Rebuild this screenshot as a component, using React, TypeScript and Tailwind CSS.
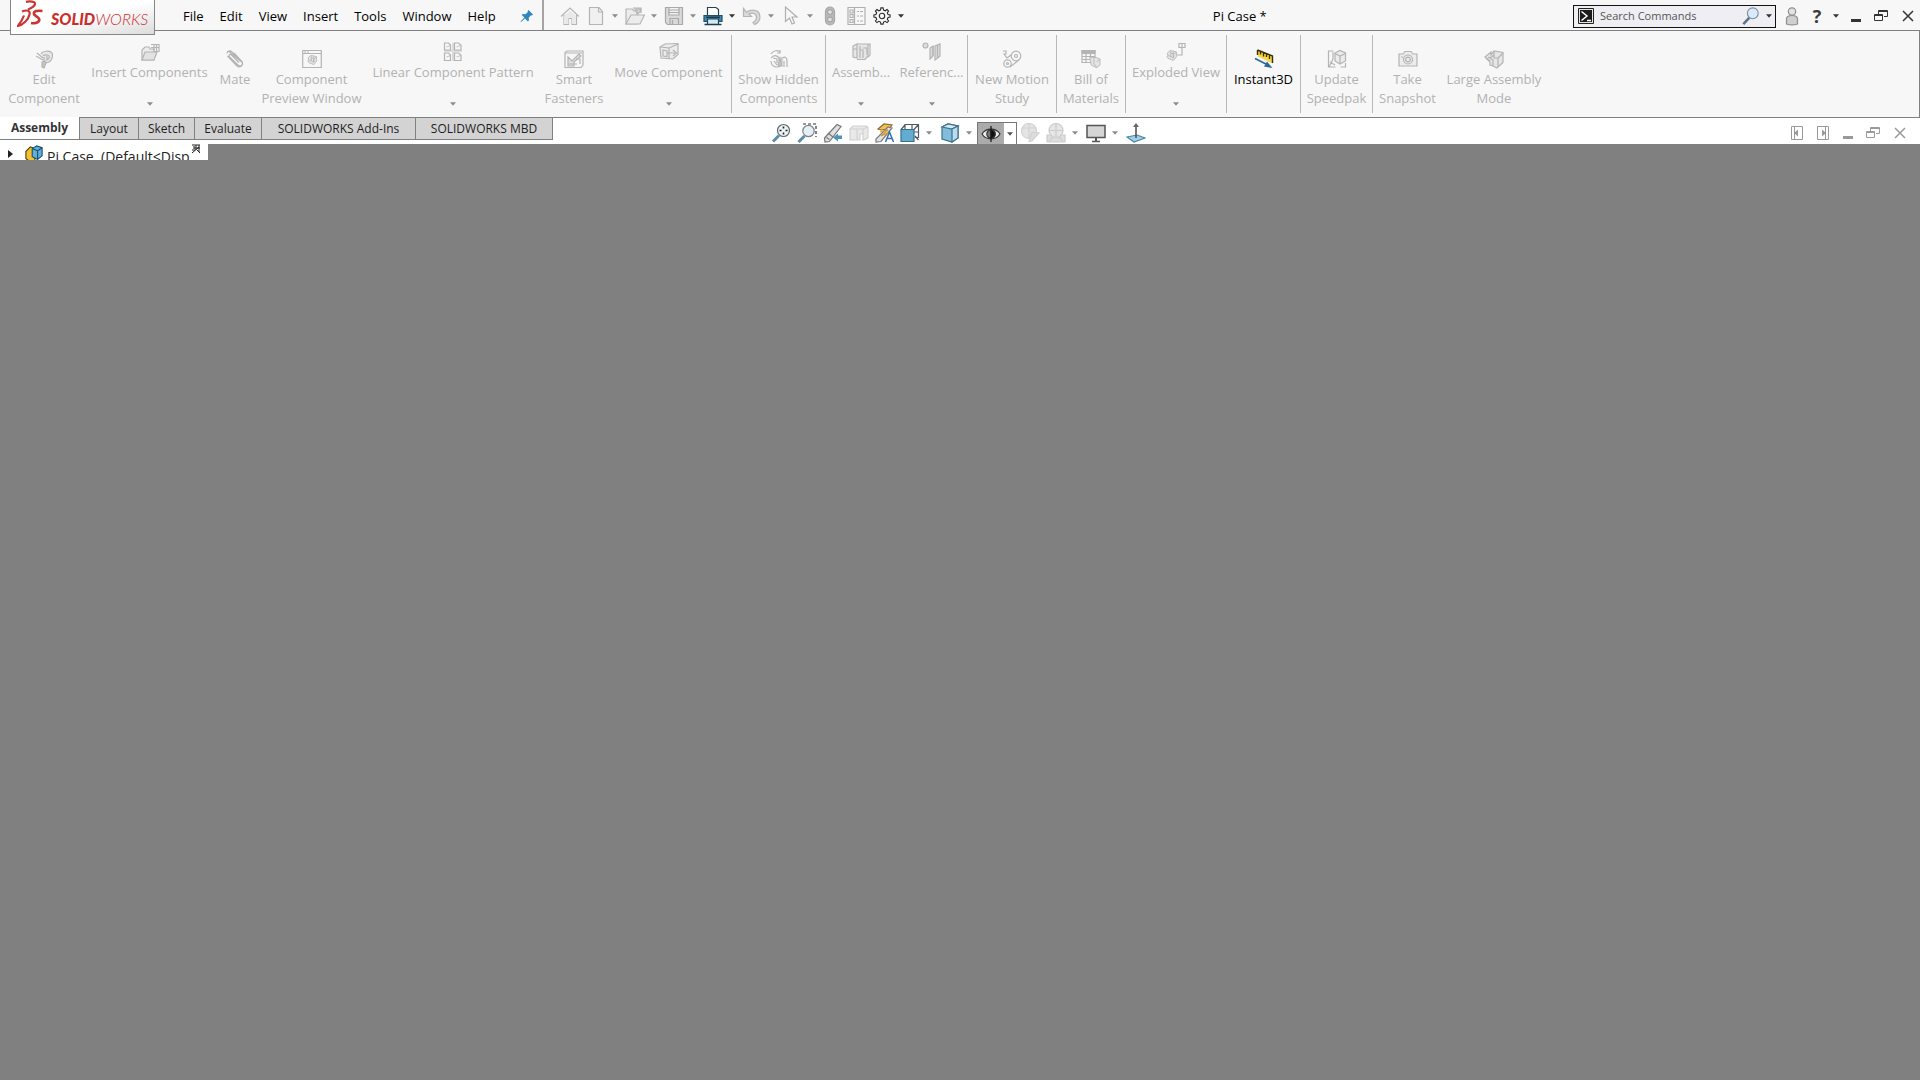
import React from "react";

type P = { children: React.ReactNode; className?: string; color?: string };

function Ico({ children, className = "size-5", color = "#b4b4b4" }: P) {
  return (
    <svg viewBox="0 0 20 20" className={`${className} shrink-0`} fill="none" stroke={color} strokeWidth="1.2" aria-hidden="true">
      {children}
    </svg>
  );
}

function Arrow({ className = "text-[#8c8c8c]" }: { className?: string }) {
  return (
    <svg viewBox="0 0 6 4" className={`h-1 w-1.5 shrink-0 ${className}`} aria-hidden="true">
      <path d="M0 0.3h6L3 3.7z" fill="currentColor" />
    </svg>
  );
}

/* ---------- shared component glyph ---------- */
const Part = ({ t = "" }: { t?: string }) => (
  <g transform={t}>
    <path d="M4 6.5 8 3l4 .5 5 1.5v7l-4 5-3-1-5-2-1.500-3 1.500-1z" fill="#e4e4e4" />
    <path d="M9 4v7.500M9 7h3.500v6M9 11.500l4 2V8.500L17 5M5 10l4 1.500M12.500 4.500v2.500" />
  </g>
);

const icons = {
  edit: (
    <>
      <path d="M7 5c1-3 9-4 11-1 1.500 3 0 7-3 9l-4 1" fill="#e8e8e8" />
      <path d="M9 6.500c2-1 5-1 6 .5s-1 4-3 4M10 8v5M13 7v3M3 4l6 5M2 7l7 4" />
      <path d="M8 13l3-1 1 2-2 5-2-1z" fill="#c4c4c4" />
    </>
  ),
  insert: (
    <>
      <path d="M2 18V8l3-3h4l1 2h4v11z" fill="#ececec" />
      <path d="M2 18 5 10h12l-3 8z" fill="#e2e2e2" />
      <path d="M11 2.500h8v7h-5M14 2.500v6M11 5.500h8M16.500 3v6" />
    </>
  ),
  mate: (
    <path d="M2 4.500c0-2.500 3-3.500 5-1.500l9.500 9.500c2.500 2.500-.5 6-3.500 3.500L4.500 8C3 6 5 4.500 6.500 6l7.500 7.500M4 2.500l12 10M2.500 7l9.500 10c3 2.500 7-1 5-4.500L9 4" />
  ),
  preview: (
    <>
      <path d="M.7 1.500h18.600v17H.7zM.7 4.500h18.600" />
      <path d="M2 3h2M5 3h2" />
      <Part t="translate(3.500 4.500) scale(.65)" />
    </>
  ),
  linear: (
    <>
      <path d="M1.500 1h4l2 2v5h-6zM11.500 1h4l2.500 2v5h-6.500zM1.500 11h4l2 2v5.500h-6zM11.500 11h4l2.500 2v5.500h-6.500z" />
      <path d="M3.500 5l4-1.500M13.500 5l4-1.500M3.500 15l4-1.500M13.500 15l4-1.500M1 9h8M11 9h8M10 1v18" strokeWidth=".8" />
    </>
  ),
  smart: (
    <>
      <path d="M1 3.500 3 2h16v14l-2 2.500H1z" />
      <path d="M1 4h17M4 8l4 4 7-7 2 2-7 6v4H4z" fill="#dedede" />
      <path d="M5 15h8M12 10h4v5" />
    </>
  ),
  move: (
    <>
      <path d="M1 5 6 2l13-.5v11L14 17l-12-1z" fill="#ececec" />
      <path d="M1 5l9 1v11M10 6l9-4M4 8v6l4 .5V9zM8 11h8M14 8l3.500 3-3.500 3" />
    </>
  ),
  hidden: (
    <>
      <path d="M2 5c2-4 7-4 9-2M11 1v3H8M2 9c4-5 9-1 8 3M4 9l4 1v4M2 12c0 4 3 6 6 6s5-2 5-6V8" />
      <path d="M5 12l3 4M14 9c2-2 4 0 4 3M15 12v6M18 12v6" />
      <path d="M11 9l-2 7 4 1z" fill="#c8c8c8" />
    </>
  ),
  assembly: (
    <>
      <path d="M2 4 6 2v14l-4-1zM6 2h11v12l-3 3.500H6" fill="#e6e6e6" />
      <path d="M9 4v12M12 6h4v7M2 7h4M9 8h3v8M17 3l2-1v11l-2 2" />
    </>
  ),
  reference: (
    <>
      <circle cx="3.500" cy="3.500" r="2.500" fill="#dcdcdc" />
      <path d="M8 6v11l3-3V4zM13 4v14l5-4V2z" fill="#dcdcdc" />
      <path d="M11 4v10M15.500 3v13" />
    </>
  ),
  motion: (
    <>
      <circle cx="14" cy="7" r="4.800" />
      <circle cx="14" cy="7" r="1.500" />
      <circle cx="5.500" cy="14.500" r="3.700" />
      <circle cx="5.500" cy="14.500" r="1" />
      <path d="M1 2h3v3H2l3 4 4-3M8 18l9-7" />
    </>
  ),
  bill: (
    <>
      <path d="M1 1.500h13v12H1zM1 4.500h13M1 7.500h13M1 10.500h8M5 1.500v12M9.500 4v8" />
      <path d="M1 1.500h13v2H1z" fill="#b4b4b4" />
      <g transform="translate(7.500 6.500) scale(.68)"><path d="M2 3h9l6 2v9l-5 4-8-4z" fill="#e4e4e4" /><path d="M8 4v8l4 5M12 9l5-3" /></g>
    </>
  ),
  exploded: (
    <>
      <Part t="translate(-1.500 6.500) scale(.7)" />
      <path d="M13 1.500h6v4h-6zM16 1.500V13h-5" />
    </>
  ),
  update: (
    <>
      <path d="M1.500 6V2h5M18.500 14v4h-5M1.500 3v15h7M6 3v7l-4 8M3 13l5 3" />
      <path d="M8 4l5-2.500 5.500 2.500v8L13 15l-5-3z" fill="#ebebeb" />
      <path d="M13 7v8M8 4.500l5 2.500 5.500-2.500" />
    </>
  ),
  snapshot: (
    <>
      <path d="M1 5h4l2-2.500h6L15 5h4v12H1z" fill="#ececec" />
      <circle cx="10" cy="10.500" r="4.500" />
      <circle cx="10" cy="10.500" r="2.300" />
      <path d="M3 8h2" />
    </>
  ),
  large: (
    <>
      <path d="M1 8l6-5v3l3-4 9 1.500v10L13 19l-4-2-3-1v-3z" fill="#e6e6e6" />
      <path d="M10 2v7h4v9M14 9l5-5M4 8l5 3v6M6 12l-4-3M10 6l-4 3" />
    </>
  ),
};

type Item = { icon: keyof typeof icons | "instant"; lines: string[]; w: string; drop?: boolean; sep?: boolean };

const ribbon: Item[] = [
  { icon: "edit", lines: ["Edit", "Component"], w: "w-[88px]" },
  { icon: "insert", lines: ["Insert Components"], w: "w-[123px]", drop: true },
  { icon: "mate", lines: ["Mate"], w: "w-12" },
  { icon: "preview", lines: ["Component", "Preview Window"], w: "w-[105px]" },
  { icon: "linear", lines: ["Linear Component Pattern"], w: "w-[178px]", drop: true },
  { icon: "smart", lines: ["Smart", "Fasteners"], w: "w-16" },
  { icon: "move", lines: ["Move Component"], w: "w-[126px]", drop: true, sep: true },
  { icon: "hidden", lines: ["Show Hidden", "Components"], w: "w-[94px]", sep: true },
  { icon: "assembly", lines: ["Assemb..."], w: "w-[70px]", drop: true },
  { icon: "reference", lines: ["Referenc..."], w: "w-[72px]", drop: true, sep: true },
  { icon: "motion", lines: ["New Motion", "Study"], w: "w-[89px]", sep: true },
  { icon: "bill", lines: ["Bill of", "Materials"], w: "w-[69px]", sep: true },
  { icon: "exploded", lines: ["Exploded View"], w: "w-[101px]", drop: true, sep: true },
  { icon: "instant", lines: ["Instant3D"], w: "w-[74px]", sep: true },
  { icon: "update", lines: ["Update", "Speedpak"], w: "w-[72px]", sep: true },
  { icon: "snapshot", lines: ["Take", "Snapshot"], w: "w-[69px]" },
  { icon: "large", lines: ["Large Assembly", "Mode"], w: "w-[104px]" },
];

function RibbonButton({ item }: { item: Item }) {
  const live = item.icon === "instant";
  return (
    <div className={`flex shrink-0 items-center ${item.w}`}>
      <button
        className={`flex h-full min-w-0 flex-1 flex-col items-center whitespace-nowrap text-[13px] leading-[19px] ${live ? "text-black" : "text-[#b2b2b2]"} ${item.drop ? "pt-[11px]" : "pt-[18px]"}`}
      >
        {item.icon === "instant" ? (
          <Ico color="#3a3000">
            <path d="M4 1.500 18.500 7v7.500L4 7.500z" fill="#f7d64a" stroke="none" />
            <path d="M3.500 1 18.500 7v7M3.500 1v5M6.500 2.500v3M9.500 3.500v4M12.500 5v3M15.500 6v4" strokeWidth="1.400" />
            <path d="M1 9.500 12 15" stroke="#2a6b95" strokeWidth="1.800" />
            <path d="M13 12.500 18.500 19 10 17.500z" fill="#2a6b95" stroke="none" />
          </Ico>
        ) : (
          <Ico>{icons[item.icon]}</Ico>
        )}
        <span className="mt-px">
          {item.lines.map((l) => (
            <span key={l} className="block">{l}</span>
          ))}
        </span>
        {item.drop && <span className="mt-5"><Arrow /></span>}
      </button>
      {item.sep && <span className="h-[78px] w-px bg-[#b8b8b8]" />}
    </div>
  );
}

const menus = ["File", "Edit", "View", "Insert", "Tools", "Window", "Help"];

function TB({ label, w = "w-5", children }: { label: string; w?: string; children: React.ReactNode }) {
  return (
    <button aria-label={label} className={`flex h-full shrink-0 items-center justify-center ${w}`}>
      {children}
    </button>
  );
}

function Header() {
  return (
    <header className="relative flex h-[31px] items-center border-b border-[#808080] bg-[#f7f7f7] pt-0.5">
      <a href="#home" aria-label="SOLIDWORKS" className="absolute top-0 left-2.5 z-10 flex h-[35px] w-[145px] border border-t-0 border-[#858585] bg-linear-to-br from-white via-white to-[#dcdcdc] pl-1.5">
        <svg viewBox="0 0 26 28" className="h-7 w-[26px] shrink-0" fill="none" stroke="#c93632" aria-hidden="true">
          <path d="M9 1.800c4-.8 9.500-.3 9 2.200-.4 2.300-3.500 4-7 5.500" strokeWidth="2.200" />
          <path d="M5 11.500c5-2 8.500-.8 7.500 3C11.500 19.500 6 25 .8 26c3-3.500 5-7 6.200-10.500" strokeWidth="2.200" />
          <path d="M25.500 11c-5-.8-8.500.2-8.700 2.500-.2 2.500 6 3.300 5.500 6.500-.4 2.700-4.500 3.700-8.300 3" strokeWidth="2.600" />
        </svg>
        <span className="ml-2 flex pt-2 text-base leading-[22px] italic text-[#cb2f2b] font-['Lato']">
          <b className="font-black">SOLID</b>
          <span className="font-light">WORKS</span>
        </span>
      </a>
      <nav className="ml-[183px] flex gap-4 text-[13px] leading-5 text-black">
        {menus.map((m) => (
          <button key={m}>{m}</button>
        ))}
      </nav>
      <button aria-label="Pin menu" className="ml-6">
        <svg viewBox="0 0 14 14" className="size-3.5" aria-hidden="true">
          <path d="M8.500 1 13 5.500l-1 1-1-.2-2.300 2.400.2 2.800-1 1L5 9.500 1 13l-.5-.5L4.500 8.500 1.700 6l1-1 2.800.2L7.900 3l-.3-1z" fill="#2f86bd" />
        </svg>
      </button>
      <span className="-mt-0.5 ml-2 w-0.5 self-stretch bg-[#a4a4a4]" />
      <div className="ml-4 flex h-full items-center">
        <TB label="Home">
          <Ico color="#b5b5b5"><path d="M1 10.500 10 2l9 8.500M4 9v9.500h4.500v-6h3.500v6h4.500V9" /><path d="M4 10l6-5.500 6 5.500v8h-4v-6H8.500v6H4z" fill="#e9e9e9" stroke="none" /></Ico>
        </TB>
        <TB label="New" w="ml-1.5 w-5">
          <Ico color="#b5b5b5"><path d="M3.500 1.500h9.500l3.500 4v13h-13z" fill="#f0f0f0" /><path d="M12.500 1.500v4.500h4" /></Ico>
        </TB>
        <TB label="New options" w="ml-[3px] w-3"><Arrow /></TB>
        <TB label="Open" w="ml-1 w-5">
          <Ico color="#b5b5b5"><path d="M1 18V3h6l2 2h3v13z" fill="#ececec" /><path d="M1 18 6 9h13.500L15 18z" fill="#ececec" /><path d="M8 2h8v5M10 4l3 4 3-4z" fill="#c8c8c8" /></Ico>
        </TB>
        <TB label="Open options" w="ml-[3px] w-3"><Arrow /></TB>
        <TB label="Save" w="ml-1 w-5">
          <Ico color="#a9a9a9"><path d="M1.500 1.500h17v17h-15l-2-2z" fill="#d9d9d9" /><path d="M5 1.500h10V9H5z" fill="#f2f2f2" /><path d="M5 4h10M5 6.500h10M6 18.500V12.500h8.500v6M8.500 14v4" /></Ico>
        </TB>
        <TB label="Save options" w="ml-[3px] w-3"><Arrow /></TB>
        <TB label="Print" w="ml-1 w-5">
          <Ico color="#2b3f4c"><path d="M4.500 9V1.500h8.500l2.500 2V9" fill="#fff" /><path d="M1 9.500h18v6H1z" fill="#3f87ac" stroke="#1e506e" /><path d="M4.500 13h11v5.500h-11z" fill="#d5e9f2" /><path d="M1.500 18.500h17M3 11.300h14" stroke="#173f58" strokeWidth="1.500" /></Ico>
        </TB>
        <TB label="Print options" w="ml-[3px] w-3"><Arrow className="text-[#333]" /></TB>
        <TB label="Undo" w="ml-1 w-5">
          <Ico color="#b5b5b5"><path d="M1.500 2.500v8h8L7 8c4-2 8 0 7.500 4-.2 2-1.500 3.500-3.500 4.500l1.500 2c8-3.500 7-14.500-2-14.300-2.500 0-4.500 1-6 2z" fill="#dadada" /></Ico>
        </TB>
        <TB label="Undo options" w="ml-[3px] w-3"><Arrow /></TB>
        <TB label="Select" w="ml-1 w-5">
          <Ico color="#b0b0b0"><path d="M4.500 1v14.500l4-3.500 2.500 6 2.500-1-2.500-6h5z" fill="#f7f7f7" /></Ico>
        </TB>
        <TB label="Select options" w="ml-[3px] w-3"><Arrow /></TB>
        <TB label="Rebuild" w="ml-1 w-5">
          <Ico color="#a8a8a8"><rect x="5.500" y="1" width="9" height="18" rx="4.500" fill="#b9b9b9" /><circle cx="10" cy="6" r="2.400" fill="#e2e2e2" /><circle cx="10" cy="13.500" r="2.400" fill="#e2e2e2" /></Ico>
        </TB>
        <TB label="File properties" w="ml-1.5 w-5">
          <Ico color="#b0b0b0"><path d="M2 1.500h17v17H2zM8.500 1.500v17M4 4h3v3H4zM4 8.500h3v3H4zM4 13.500h3v3H4zM11 5.500h2M14 5.500h3M11 10h2M14 10h3M11 15h2M14 15h3" /></Ico>
        </TB>
        <TB label="Options" w="ml-1.5 w-5">
          <Ico className="size-[18px]" color="#2b2b2b">
            <path d="M8.300 3.400 8.800 1h2.400l.5 2.400 1.900.8 2-1.400 1.700 1.700-1.400 2 .8 1.900 2.300.5v2.300l-2.300.5-.8 1.900 1.400 2-1.700 1.700-2-1.400-1.900.8-.5 2.300H8.800l-.5-2.300-1.900-.8-2 1.400-1.700-1.700 1.400-2-.8-1.900L1 11.200V8.900l2.300-.5.800-1.900-1.400-2 1.700-1.700 2 1.400z" />
            <circle cx="10" cy="10" r="3" />
          </Ico>
        </TB>
        <TB label="More options" w="ml-[3px] w-3"><Arrow className="text-[#333]" /></TB>
      </div>
      <h1 className="flex-1 text-center text-[13px] leading-5 text-black">Pi Case *</h1>
      <div className="flex h-[23px] w-[203px] items-center border-[1.5px] border-[#111] bg-[#eeeef3] pr-[3px] pl-1">
        <svg viewBox="0 0 16 16" className="size-4 shrink-0" aria-hidden="true">
          <path d="M.5.5h15v15H.5z" fill="#e5e5e5" stroke="#222" />
          <path d="M2 2h12v12H2z" fill="#1b1b1b" />
          <path d="M3.500 3.500 9 8l-5.500 4.500M9 12.500h4" stroke="#fff" strokeWidth="1.500" fill="none" />
        </svg>
        <input aria-label="Search Commands" placeholder="Search Commands" className="ml-1.5 min-w-0 flex-1 bg-transparent text-[11px] leading-4 outline-none placeholder:text-[#555]" />
        <button aria-label="Search">
          <Ico className="size-[18px]" color="#7b8ca0"><circle cx="12" cy="7" r="6" fill="#d9ebfa" /><path d="M8 12 1.500 19" stroke="#5b7488" strokeWidth="2.800" /></Ico>
        </button>
        <button aria-label="Search options" className="ml-1.5"><Arrow className="text-[#333]" /></button>
      </div>
      <div className="flex h-full items-center">
        <TB label="Account" w="ml-1.5 w-5">
          <Ico color="#8e8e8e"><circle cx="10" cy="5.500" r="3.700" fill="#e2e2e2" /><path d="M4.500 18v-5c0-2.500 2-3.500 5.500-3.500s5.500 1 5.500 3.500v5c-3 1-8 1-11 0z" fill="#cfcfcf" /></Ico>
        </TB>
        <button aria-label="Help" className="ml-1 w-[22px] text-lg leading-5 font-bold text-[#3c3c3c]">?</button>
        <TB label="Help options" w="ml-0.5 w-3"><Arrow className="text-[#333]" /></TB>
        <WindowControls dark />
      </div>
    </header>
  );
}

function WindowControls({ dark = false }: { dark?: boolean }) {
  const c = dark ? "#333333" : "#9a9a9a";
  return (
    <span className={`flex items-center ${dark ? "mr-1.5 ml-2" : "mr-3.5"}`}>
      <button aria-label="Minimize"><svg viewBox="0 0 12 16" className="h-4 w-3"><path d="M1 11h10v3H1z" fill={c} /></svg></button>
      <button aria-label="Restore" className="ml-3">
        <svg viewBox="0 0 14 16" className="h-4 w-3.5" fill="none" stroke={c}><path d="M4.500 6V2.500h9v6H10M4.500 3.500h9M.5 6.500h8v6h-8zM.5 7.500h8" /></svg>
      </button>
      <button aria-label="Close" className="ml-3.5">
        <svg viewBox="0 0 12 16" className="h-4 w-3" fill="none" stroke={c} strokeWidth="1.500"><path d="M1 3l10 10M11 3 1 13" /></svg>
      </button>
    </span>
  );
}

const tabs = [
  { t: "Layout", w: "w-[59px]" },
  { t: "Sketch", w: "w-14" },
  { t: "Evaluate", w: "w-[67px]" },
  { t: "SOLIDWORKS Add-Ins", w: "w-[154px]" },
  { t: "SOLIDWORKS MBD", w: "w-[138px]" },
];

function ViewBar() {
  return (
    <div className="flex h-[26px] items-center overflow-hidden pt-1 pr-[3px]">
      <TB label="Zoom to fit">
        <Ico color="#5f6b73"><circle cx="12.500" cy="7.500" r="6" fill="#eef4f7" /><path d="M12.500 3.500v2M12.500 9.500v2M8.500 7.500h2M14.500 7.500h2" stroke="#222" strokeWidth="1.600" /><path d="M8 12.500 2 18.500" stroke="#5c8da5" strokeWidth="3" /></Ico>
      </TB>
      <TB label="Zoom to area" w="ml-1.5 w-5">
        <Ico color="#7a868d"><path d="M6 1h13v13" stroke="#333" strokeDasharray="3 2" /><circle cx="11.500" cy="8" r="5.700" fill="#e6eff4" /><path d="M7.500 13 1.500 19" stroke="#5c8da5" strokeWidth="3" /></Ico>
      </TB>
      <TB label="Previous view" w="ml-1.5 w-5">
        <Ico color="#777"><path d="M1.500 15 14 1.500l4 2L6.500 18.500l-4.500.5z" fill="#e0e0e0" /><path d="M5 10l5 4M3.500 14.500l3 2" /><path d="M19 12.500v3.500h-4v2.500L10 14.500l5-4v2z" fill="#4c94be" stroke="none" /></Ico>
      </TB>
      <TB label="Section view" w="ml-1.5 w-5">
        <Ico color="#d2d2d2"><path d="M1 6l3-3h14l1 2v10l-5 2v-6h-3v6H1z" fill="#e9e9e9" /><path d="M8 6v11M1 6h13v5M14 6l5-2" /></Ico>
      </TB>
      <TB label="Dynamic annotation views" w="ml-[5px] w-5">
        <Ico color="#8a6d2c"><path d="M4 6l6-5 8 1-3 4-8 1z" fill="#f6c055" /><path d="M2 16 14 4l4 1L7 18.500l-5 .5z" fill="#e2e2e2" stroke="#7c7c7c" /><path d="M6 9l8-2-7 6 7-3" stroke="#d99a28" /><path d="M11.500 19 15.500 9l4 10M13 15.500h5" stroke="#356fb0" strokeWidth="1.500" /></Ico>
      </TB>
      <TB label="View orientation" w="ml-1.5 w-5">
        <Ico color="#4e5a60"><path d="M5 6V1.500h13.500v13H15M18.500 1.500l-4.500 5M12 1.500v5M14 9h4.500M15 13l3.500 4M1 6.500 5.500 1.500" /><path d="M1 6.500h13v12H1z" fill="#64abd0" stroke="#34718f" /></Ico>
      </TB>
      <TB label="View orientation options" w="ml-[3px] w-3"><Arrow /></TB>
      <TB label="Display style" w="ml-[5px] w-5">
        <Ico color="#3c718c"><path d="M2 4 8 1l10 2v12l-6 4-10-3z" fill="#82bddb" /><path d="M2 4l10 2 6-3L8 1z" fill="#d3eaf5" /><path d="M12 6l6-3v12l-6 4z" fill="#b9dcee" /></Ico>
      </TB>
      <TB label="Display style options" w="ml-[3px] w-3"><Arrow /></TB>
      <div className="ml-0.5 flex h-full items-center border border-b-0 border-[#777]">
        <button aria-label="Hide or show items" aria-pressed="true" className="flex h-full w-[26px] items-center justify-center bg-[#ababab]">
          <Ico color="#333"><path d="M1 10c4-6.500 14-6.500 18 0-4 6.500-14 6.500-18 0z" fill="#eee" /><circle cx="10" cy="10" r="4.200" fill="#777" /><path d="M10 5.800a4.200 4.200 0 0 1 0 8.400z" fill="#111" /><path d="M10 2v16" stroke="#111" /></Ico>
        </button>
        <TB label="Hide or show options" w="w-3"><Arrow className="text-[#555]" /></TB>
      </div>
      <TB label="Edit appearance" w="ml-[3px] w-5">
        <Ico color="#d2d2d2"><circle cx="9" cy="8" r="7.500" fill="#e4e4e4" /><path d="M9 .5v15M2 5h14" /><path d="M12 9l7 1-7 8-3 .5 1-4z" fill="#dcdcdc" /></Ico>
      </TB>
      <TB label="Apply scene" w="ml-1.5 w-5">
        <Ico color="#cccccc"><path d="M1 12h18v7H1z" fill="#ddd" /><circle cx="10" cy="7.500" r="7" fill="#e6e6e6" /><path d="M10 .5v14M3 7.500h14M3 19l4-5M17 19l-4-5" /></Ico>
      </TB>
      <TB label="Scene options" w="ml-[3px] w-3"><Arrow /></TB>
      <TB label="View settings" w="ml-[5px] w-5">
        <Ico color="#555"><path d="M1 2.500h18v12H1z" fill="#d5d5d5" strokeWidth="1.500" /><path d="M10 15v3" strokeWidth="2" /><path d="M6 18.500h8" strokeWidth="1.500" /></Ico>
      </TB>
      <TB label="View settings options" w="ml-[3px] w-3"><Arrow /></TB>
      <TB label="Triad" w="ml-[5px] w-5">
        <Ico color="#4688a8"><path d="M1 14l10-2 8 3-11 4z" fill="#a5cfe2" /><path d="M10 15V3" stroke="#555" strokeWidth="1.600" /><path d="M7 4 10 0l3 4z" fill="#666" stroke="none" /></Ico>
      </TB>
    </div>
  );
}

export default function App() {
  return (
    <div className="flex min-h-screen flex-col overflow-x-hidden bg-[#808080] font-['Open_Sans','Noto_Sans',sans-serif]">
      <Header />
      <section aria-label="Assembly tools" className="flex h-[87px] border-r border-b border-[#808080] bg-[#f7f7f7]">
        {ribbon.map((r) => (
          <RibbonButton key={r.lines.join()} item={r} />
        ))}
      </section>
      <div className="grid h-[26px] grid-cols-[1fr_auto_1fr] bg-white">
        <div role="tablist" className="relative -mt-px flex h-[23px] text-[12px] leading-4 whitespace-nowrap text-[#1e1e1e]">
          <button role="tab" aria-selected="true" className="w-[79px] border-b border-[#808080] bg-white font-bold text-[#333]">Assembly</button>
          {tabs.map((t) => (
            <button key={t.t} role="tab" aria-selected="false" className={`border border-r-0 border-[#808080] bg-[#d3d3d3] last:border-r ${t.w}`}>
              {t.t}
            </button>
          ))}
        </div>
        <ViewBar />
        <div className="flex items-center justify-end pt-1">
          <button aria-label="Previous pane" className="mr-3">
            <svg viewBox="0 0 14 14" className="size-3.5" fill="none" stroke="#9a9a9a"><path d="M1.500.5h11v13h-11zM4.500.5v13" /><path d="M8 3.500v7L4 7z" fill="#9a9a9a" stroke="none" /></svg>
          </button>
          <button aria-label="Next pane" className="mr-3">
            <svg viewBox="0 0 14 14" className="size-3.5" fill="none" stroke="#9a9a9a"><path d="M1.500.5h11v13h-11zM9.500.5v13" /><path d="M6 3.500v7L10 7z" fill="#9a9a9a" stroke="none" /></svg>
          </button>
          <WindowControls />
        </div>
      </div>
      <aside className="flex h-4 w-52 items-start overflow-hidden bg-white">
        <button aria-label="Expand Pi Case" className="mt-1.5 ml-2 shrink-0">
          <svg viewBox="0 0 5 8" className="h-2 w-[5px]"><path d="M0 0l5 4-5 4z" fill="#222" /></svg>
        </button>
        <Ico className="mt-px ml-3 size-[18px]" color="#4a3c10">
          <path d="M1 7 6 2l5 2v14l-5 1-5-4z" fill="#f2c230" />
          <path d="M8 4l5-3 6 2v9l-5 4-6-3z" fill="#5bb0dc" stroke="#1c4c66" />
          <path d="M8 4l6 2.500V16M14 6.500 19 3" stroke="#1c4c66" />
        </Ico>
        <span className="mt-[3px] ml-1 w-[144px] shrink-0 overflow-hidden text-sm leading-5 whitespace-pre text-[#222]">Pi Case  (Default&lt;Disp</span>
        <svg viewBox="0 0 10 10" className="h-2.5 w-2.5 shrink-0" aria-hidden="true">
          <path d="M1 1h8M3 2v3M5 1v5M8 1v7M1 9l7-6M3 4h6M1 6h3M6 6l3 3" stroke="#222" fill="none" />
        </svg>
      </aside>
      <main className="flex-1" />
    </div>
  );
}
